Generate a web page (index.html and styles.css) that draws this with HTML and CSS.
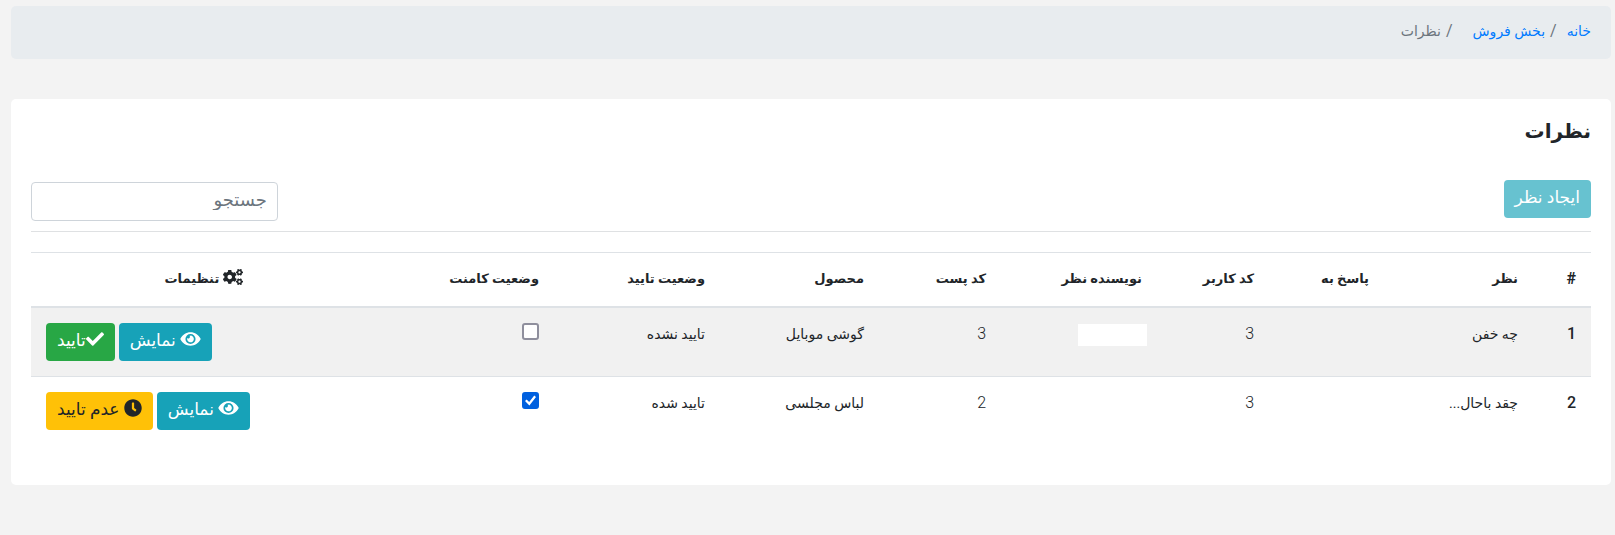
FILE: index.html
```html
<!DOCTYPE html>
<html lang="fa" dir="rtl">
<head>
<meta charset="utf-8">
<title>نظرات</title>
<link rel="stylesheet" href="styles.css">
</head>
<body>
<svg class="sprite" aria-hidden="true">
  <symbol id="eye" viewBox="0 0 576 512"><path d="M572.52 241.4C518.29 135.59 410.93 64 288 64S57.68 135.64 3.48 241.41a32.35 32.35 0 0 0 0 29.19C57.71 376.41 165.07 448 288 448s230.32-71.64 284.52-177.41a32.35 32.35 0 0 0 0-29.19zM288 400a144 144 0 1 1 144-144 143.93 143.93 0 0 1-144 144zm0-240a95.31 95.31 0 0 0-25.31 3.79 47.85 47.85 0 0 1-66.9 66.9A95.78 95.78 0 1 0 288 160z"/></symbol>
  <symbol id="check" viewBox="0 0 512 512"><path d="M173.898 439.404l-166.4-166.4c-9.997-9.997-9.997-26.206 0-36.204l36.203-36.204c9.997-9.998 26.207-9.998 36.204 0L192 312.69 432.095 72.596c9.997-9.997 26.207-9.997 36.204 0l36.203 36.204c9.997 9.997 9.997 26.206 0 36.204l-294.4 294.401c-9.998 9.997-26.207 9.997-36.204-.001z"/></symbol>
  <symbol id="clock" viewBox="0 0 512 512"><path d="M256,8C119,8,8,119,8,256S119,504,256,504,504,393,504,256,393,8,256,8Zm92.49,313h0l-20,25a16,16,0,0,1-22.49,2.5h0l-67-49.72a40,40,0,0,1-15-31.23V112a16,16,0,0,1,16-16h32a16,16,0,0,1,16,16V256l58,42.5A16,16,0,0,1,348.49,321Z"/></symbol>
  <symbol id="cogs" viewBox="0 0 640 512">
    <path id="small-cog" d="M512.1 191l-8.2 14.3c-3 5.3-9.4 7.5-15.1 5.4-11.8-4.4-22.6-10.7-32.1-18.6-4.6-3.8-5.8-10.5-2.8-15.7l8.2-14.3c-6.9-8-12.3-17.3-15.9-27.4h-16.5c-6 0-11.2-4.3-12.2-10.3-2-12-2.1-24.6 0-37.1 1-6 6.2-10.4 12.2-10.4h16.5c3.6-10.1 9-19.4 15.900-27.400l-8.200-14.300c-3-5.200-1.900-11.900 2.800-15.700 9.500-7.900 20.400-14.200 32.100-18.600 5.700-2.100 12.100.1 15.100 5.400l8.200 14.300c10.500-1.900 21.200-1.900 31.700 0L552 6.300c3-5.300 9.400-7.500 15.100-5.400 11.800 4.400 22.600 10.700 32.100 18.600 4.600 3.800 5.800 10.500 2.800 15.700l-8.200 14.300c6.900 8 12.300 17.300 15.900 27.400h16.500c6 0 11.200 4.300 12.200 10.300 2 12 2.100 24.600 0 37.100-1 6-6.200 10.400-12.200 10.400h-16.500c-3.600 10.100-9 19.400-15.900 27.400l8.200 14.300c3 5.200 1.900 11.900-2.800 15.700-9.500 7.900-20.400 14.200-32.100 18.600-5.700 2.100-12.100-.1-15.100-5.400l-8.200-14.300c-10.400 1.900-21.200 1.900-31.700 0zm-10.500-58.8c38.500 29.600 82.400-14.300 52.800-52.800-38.500-29.700-82.400 14.300-52.800 52.800z"/>
    <use href="#small-cog" y="300"/>
    <path d="M386.300 286.100l33.700 16.800c10.100 5.800 14.500 18.100 10.500 29.100-8.900 24.200-26.400 46.400-42.600 65.800-7.400 8.900-20.200 11.100-30.300 5.300l-29.100-16.800c-16 13.700-34.600 24.600-54.900 31.700v33.600c0 11.600-8.300 21.600-19.700 23.600-24.600 4.200-50.400 4.400-75.900 0-11.500-2-20-11.900-20-23.600V418c-20.300-7.200-38.900-18-54.900-31.700L74 403c-10 5.800-22.900 3.600-30.300-5.300-16.200-19.400-33.300-41.600-42.200-65.700-4-10.900.4-23.200 10.500-29.100l33.300-16.800c-3.900-20.900-3.900-42.400 0-63.400L12 205.800c-10.100-5.800-14.600-18.100-10.500-29 8.900-24.200 26-46.400 42.200-65.800 7.400-8.900 20.200-11.100 30.300-5.300l29.100 16.800c16-13.700 34.600-24.600 54.900-31.700V57.100c0-11.500 8.200-21.500 19.600-23.500 24.600-4.200 50.500-4.400 76-.1 11.500 2 20 11.900 20 23.600v33.600c20.300 7.200 38.900 18 54.900 31.700l29.100-16.800c10-5.800 22.900-3.600 30.300 5.300 16.200 19.400 33.200 41.600 42.100 65.800 4 10.900.1 23.200-10 29.100l-33.700 16.800c3.900 21 3.900 42.500 0 63.500zm-117.600 21.100c59.200-77-28.700-164.900-105.700-105.700-59.200 77 28.700 164.900 105.700 105.700z"/>
  </symbol>
</svg>

<nav aria-label="breadcrumb">
  <ol class="breadcrumb">
    <li><a href="#">خانه</a></li>
    <li><a href="#">بخش فروش</a></li>
    <li class="current" aria-current="page">نظرات</li>
  </ol>
</nav>

<main class="card">
  <h1 class="title">نظرات</h1>
  <div class="toolbar">
    <button class="btn btn-info" type="button" disabled>ایجاد نظر</button>
    <input class="search" type="text" placeholder="جستجو" aria-label="جستجو">
  </div>
  <table class="comments">
    <colgroup>
      <col class="col-index"><col class="col-comment"><col class="col-reply"><col class="col-user"><col class="col-author">
      <col class="col-post"><col class="col-product"><col class="col-approval"><col class="col-status"><col class="col-actions">
    </colgroup>
    <thead>
      <tr>
        <th scope="col" class="number">#</th>
        <th scope="col">نظر</th>
        <th scope="col">پاسخ به</th>
        <th scope="col">کد کاربر</th>
        <th scope="col">نویسنده نظر</th>
        <th scope="col">کد پست</th>
        <th scope="col">محصول</th>
        <th scope="col">وضعیت تایید</th>
        <th scope="col">وضعیت کامنت</th>
        <th scope="col" class="settings"><svg class="icon icon-cogs" aria-hidden="true"><use href="#cogs"/></svg> تنظیمات</th>
      </tr>
    </thead>
    <tbody>
      <tr>
        <th scope="row" class="number">1</th>
        <td>چه خفن</td>
        <td></td>
        <td class="number">3</td>
        <td><span class="author-mask"></span></td>
        <td class="number">3</td>
        <td>گوشی موبایل</td>
        <td>تایید نشده</td>
        <td><input class="status" type="checkbox" aria-label="وضعیت کامنت 1"></td>
        <td class="actions">
          <div class="action-list">
            <a class="btn btn-info" href="#"><svg class="icon icon-eye" aria-hidden="true"><use href="#eye"/></svg> نمایش</a>
            <button class="btn btn-success" type="button"><svg class="icon" aria-hidden="true"><use href="#check"/></svg>تایید</button>
          </div>
        </td>
      </tr>
      <tr>
        <th scope="row" class="number">2</th>
        <td>چقد باحال...</td>
        <td></td>
        <td class="number">3</td>
        <td></td>
        <td class="number">2</td>
        <td>لباس مجلسی</td>
        <td>تایید شده</td>
        <td><input class="status" type="checkbox" aria-label="وضعیت کامنت 2" checked></td>
        <td class="actions">
          <div class="action-list">
            <a class="btn btn-info" href="#"><svg class="icon icon-eye" aria-hidden="true"><use href="#eye"/></svg> نمایش</a>
            <button class="btn btn-warning" type="button"><svg class="icon" aria-hidden="true"><use href="#clock"/></svg> عدم تایید</button>
          </div>
        </td>
      </tr>
    </tbody>
  </table>
</main>
</body>
</html>
```

FILE: styles.css
```css
*, *::before, *::after {
  box-sizing: border-box;
}

body {
  margin: 0;
  padding: 6px 4px 20px 11px;
  background: #f3f3f3;
  color: #212529;
  font-family: Roboto, "DejaVu Sans", sans-serif;
  font-size: 14px;
  line-height: 24px;
}

a {
  color: #007bff;
  text-decoration: none;
}

.sprite {
  display: none;
}

.breadcrumb {
  display: flex;
  flex-wrap: wrap;
  margin: 0 0 40px;
  padding: 13px 20px 16px;
  border-radius: 5px;
  background: #e8ecef;
  color: #6c757d;
  list-style: none;
}

.breadcrumb li + li::before {
  content: "/";
  padding: 0 10px 0 5px;
  font-size: 16px;
}

.breadcrumb .current {
  padding-right: 10px;
}

.card {
  padding: 17px 20px 40px;
  border-radius: 5px;
  background: #fff;
}

.title {
  margin: 0 0 34px;
  font-size: 20px;
  font-weight: 700;
  line-height: 30px;
}

.toolbar {
  display: flex;
  align-items: flex-start;
  justify-content: space-between;
  padding-bottom: 10px;
  margin-bottom: 20px;
  border-bottom: 1px solid #dfe1e3;
}

.search {
  width: 247px;
  height: 39px;
  margin-top: 2px;
  padding: 0 10px 4px;
  border: 1px solid #ced4da;
  border-radius: 4px;
  background: #fff;
  font: inherit;
  font-size: 18px;
}

.search::placeholder {
  color: #6c757d;
  opacity: 1;
}

.btn {
  display: inline-block;
  padding: 4px 10px 8px;
  border: 1px solid transparent;
  border-radius: 4px;
  font: inherit;
  font-size: 17px;
  line-height: 24px;
  white-space: nowrap;
}

.btn-info {
  background: #17a2b8;
  color: #fff;
}

.btn-success {
  background: #28a745;
  color: #fff;
}

.btn-warning {
  background: #ffc107;
  color: #212529;
}

.btn:disabled {
  opacity: 0.65;
}

.icon {
  width: 18px;
  height: 18px;
  fill: currentColor;
  vertical-align: -2px;
}

.icon-eye {
  width: 21px;
}

.icon-cogs {
  width: 20px;
  height: 16px;
}

.comments {
  width: 100%;
  table-layout: fixed;
  border-collapse: separate;
  border-spacing: 0;
  text-align: right;
}

.col-index { width: 58px; }
.col-comment { width: 149px; }
.col-reply { width: 115px; }
.col-user { width: 112px; }
.col-author { width: 156px; }
.col-post { width: 122px; }
.col-product { width: 159px; }
.col-approval { width: 166px; }
.col-status { width: 178px; }
.col-actions { width: 345px; }

.comments th,
.comments td {
  padding: 14px 15px 15px;
  border-top: 1px solid #dee2e6;
  vertical-align: top;
}

.comments thead th {
  border-bottom: 2px solid #dee2e6;
  font-size: 13px;
  font-weight: 700;
  white-space: nowrap;
}

.comments .settings {
  text-align: center;
}

.comments tbody tr:first-child > * {
  border-top: 0;
}

.comments tbody tr:nth-child(odd) {
  background: #f1f1f1;
}

.comments .number,
.comments thead .number {
  font-size: 16px;
}

.comments td.number {
  font-weight: 300;
}

.comments tbody th.number {
  font-weight: 500;
}

.comments .actions {
  padding-top: 15px;
}

.action-list {
  display: flex;
  justify-content: flex-end;
  gap: 4px;
}

.author-mask {
  display: block;
  width: 69px;
  height: 22px;
  margin: 2px -5px 0 0;
  background: #fff;
}

.status {
  appearance: none;
  display: grid;
  place-items: center;
  width: 17px;
  height: 17px;
  margin: 1px 0 0;
  border: 2px solid #8f8f9d;
  border-radius: 3px;
  background: #fff;
}

.status:checked {
  border-color: #0060df;
  background: #0060df;
}

.status:checked::before {
  content: "";
  width: 11px;
  height: 11px;
  background: #fff;
  clip-path: polygon(0 54%, 15% 42%, 38% 64%, 84% 4%, 100% 18%, 40% 96%);
}
```
